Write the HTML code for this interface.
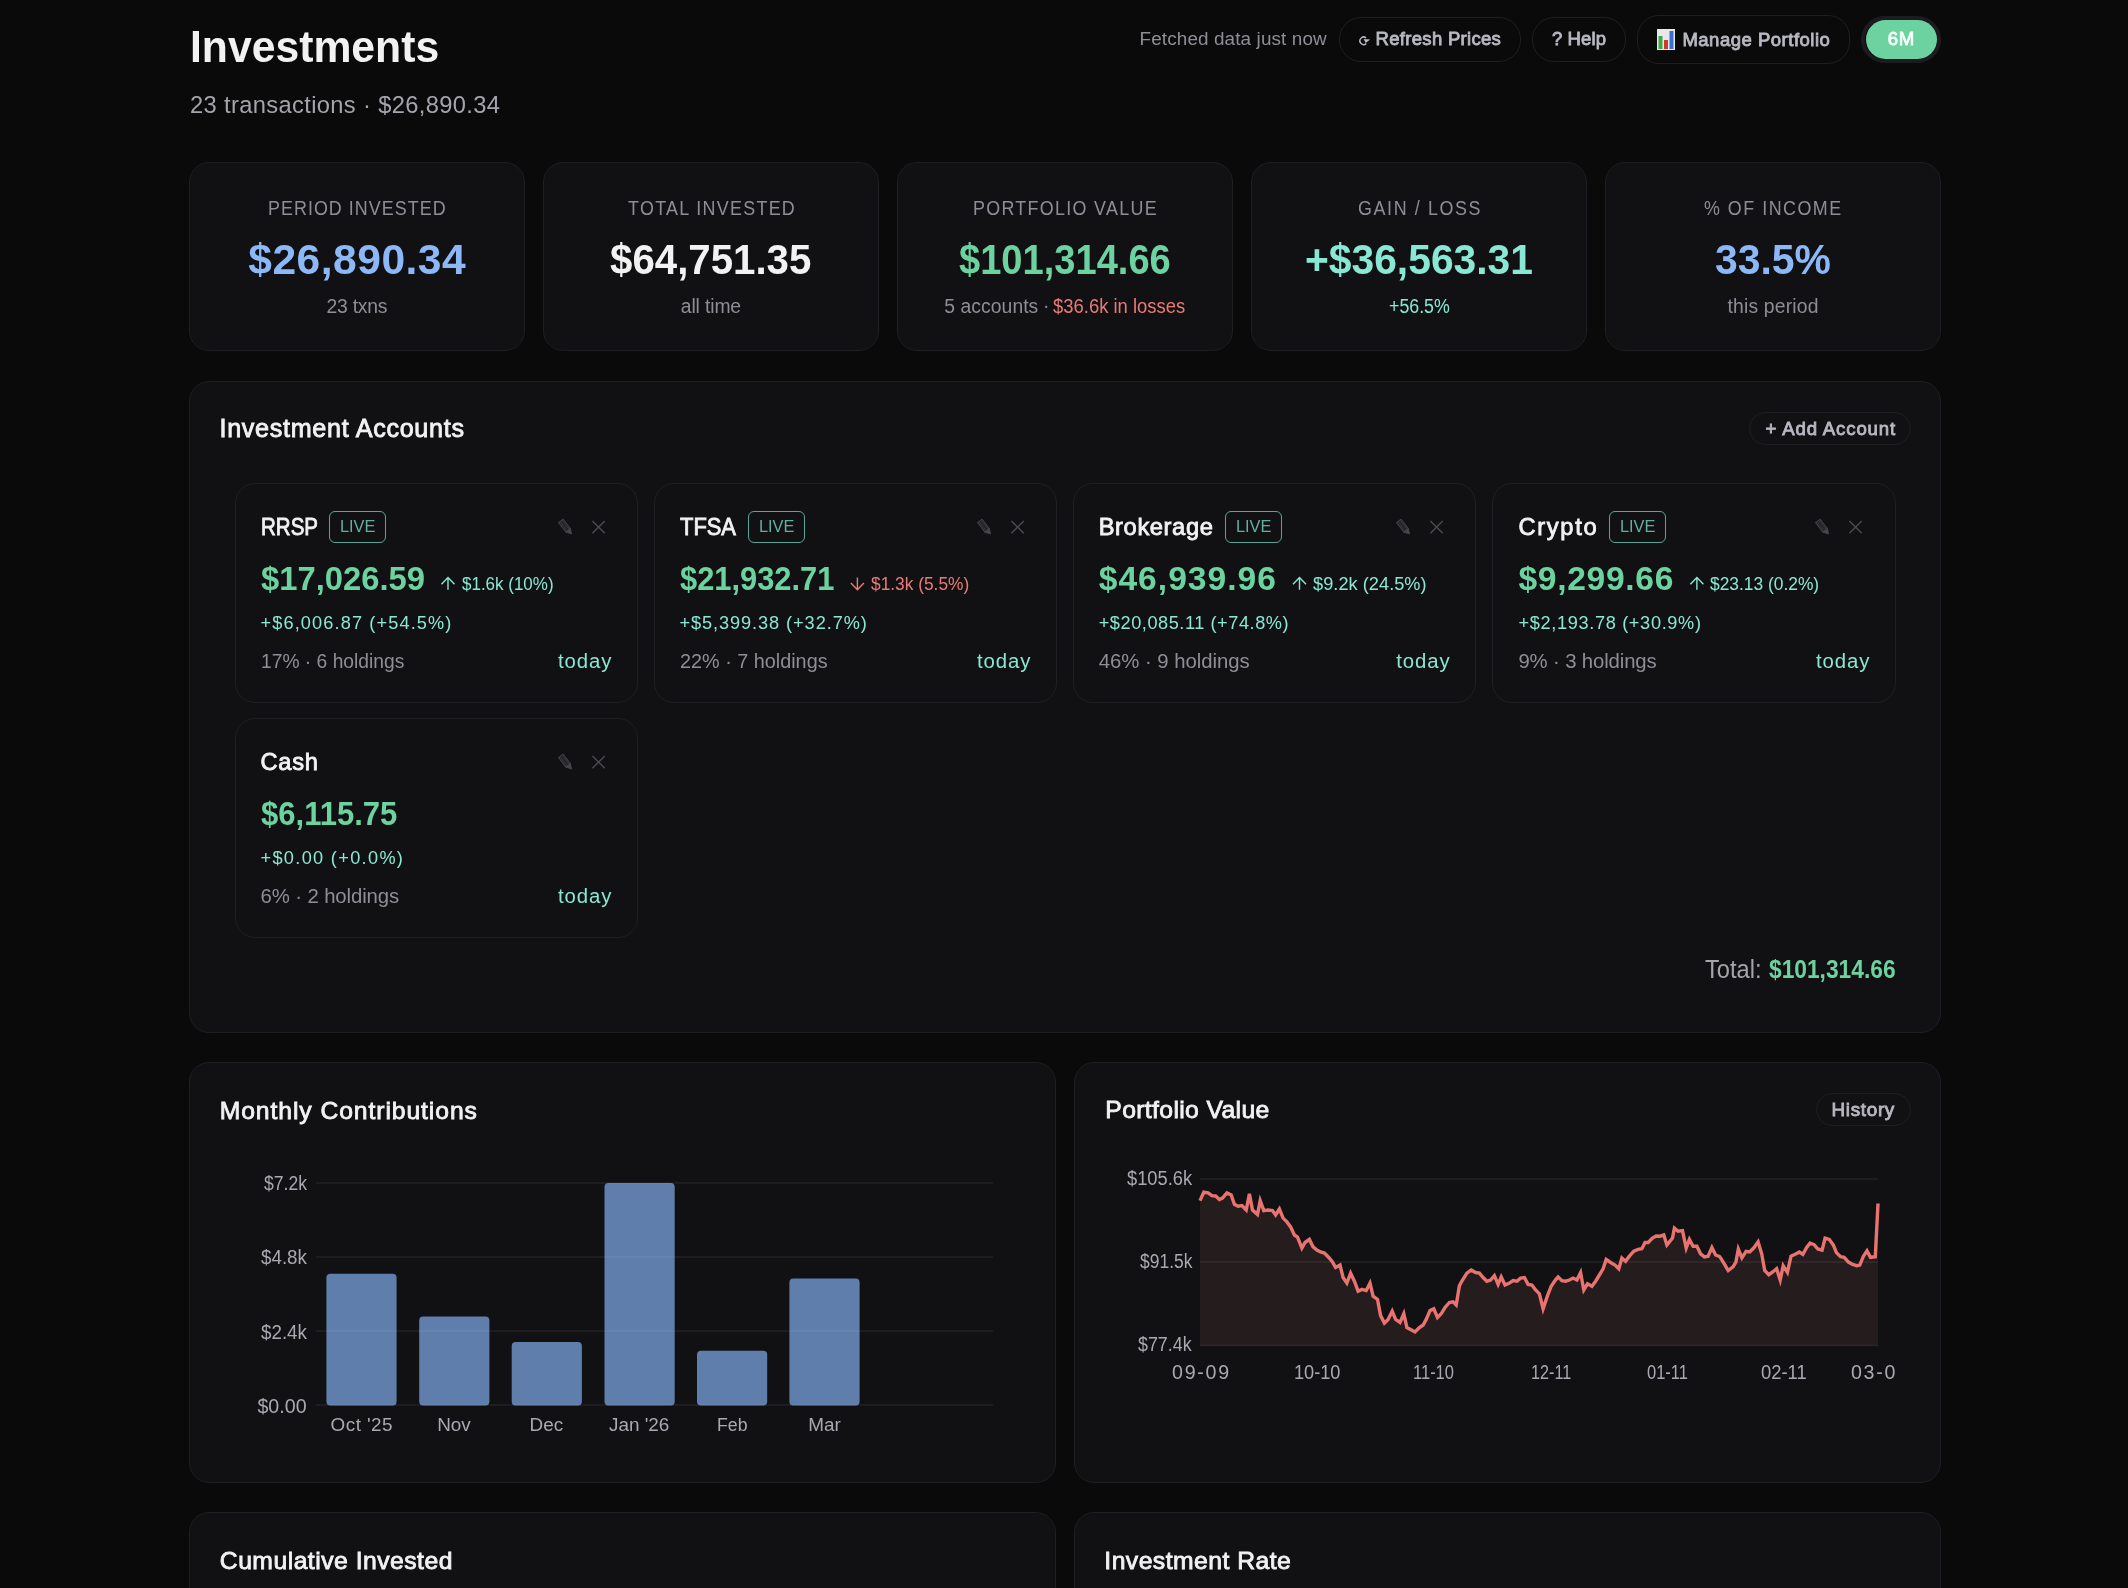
<!DOCTYPE html>
<html><head><meta charset="utf-8"><title>Investments</title>
<style>
html,body{margin:0;padding:0;background:#0a0a0b;width:2128px;height:1588px;overflow:hidden;}
body{position:relative;font-family:"Liberation Sans",sans-serif;}
.t{position:absolute;white-space:nowrap;line-height:1;}
#root{position:absolute;left:0;top:0;width:2128px;height:1588px;will-change:transform;}
.b{position:absolute;}
svg.b{overflow:visible;}
</style></head><body><div id="root">
<div class="t" style="left:190.40px;top:21.30px;font-size:45.06px;color:#f2f2f3;font-weight:700;letter-spacing:0.000px;line-height:51px;transform:scaleX(0.9478);transform-origin:0 0;">Investments</div>
<div class="t" style="left:190.00px;top:91.70px;font-size:23.69px;color:#a4a4ac;font-weight:400;letter-spacing:0.359px;line-height:26px;">23 transactions · $26,890.34</div>
<div class="t" style="left:1139.60px;top:27.80px;font-size:18.90px;color:#8e8e97;font-weight:400;letter-spacing:0.113px;line-height:21px;">Fetched data just now</div>
<div class="b" style="left:1339px;top:17px;width:182px;height:45px;border:1px solid #1f1f23;border-radius:22px;box-sizing:border-box;"></div>
<div class="t" style="left:1375.60px;top:28.00px;font-size:18.53px;color:#b8b8c2;font-weight:400;letter-spacing:0.297px;-webkit-text-stroke:0.85px #b8b8c2;line-height:21px;">Refresh Prices</div>
<svg class="b" style="left:0;top:0" width="2128" height="80"><path d="M1366.0 37.9 A3.7 3.7 0 1 0 1366.3 43.4" fill="none" stroke="#b8b8c2" stroke-width="1.45"/><path d="M1363.6 38.9 L1370.2 39.4 L1365.6 43.0 Z" fill="#b8b8c2"/></svg>
<div class="b" style="left:1532px;top:17px;width:94px;height:45px;border:1px solid #1f1f23;border-radius:22px;box-sizing:border-box;"></div>
<div class="t" style="left:1552.00px;top:28.00px;font-size:18.53px;color:#b8b8c2;font-weight:400;letter-spacing:0.085px;-webkit-text-stroke:0.85px #b8b8c2;line-height:21px;">? Help</div>
<div class="b" style="left:1637px;top:15px;width:213px;height:49px;border:1px solid #1f1f23;border-radius:22px;box-sizing:border-box;"></div>
<svg class="b" style="left:1657px;top:29px" width="18" height="21" viewBox="0 0 18 21"><rect x="0" y="0" width="18" height="21" fill="#e8e8ea"/><rect x="1.5" y="7" width="4" height="13" fill="#3aa94a"/><rect x="7" y="11" width="4" height="9" fill="#d03a2e"/><rect x="12.5" y="2" width="4" height="18" fill="#3b6fd0"/></svg>
<div class="t" style="left:1682.40px;top:28.80px;font-size:18.53px;color:#b8b8c2;font-weight:400;letter-spacing:0.500px;-webkit-text-stroke:0.85px #b8b8c2;line-height:21px;">Manage Portfolio</div>
<div class="b" style="left:1861px;top:16px;width:80px;height:47px;background:#0a0a0b;border:4px solid #1c1c20;border-radius:24px;box-sizing:border-box;"></div>
<div class="b" style="left:1866px;top:20px;width:71px;height:39px;background:#6cd3a0;border-radius:20px;"></div>
<div class="t" style="left:1887.80px;top:28.30px;font-size:18.60px;color:#f8fffb;font-weight:400;letter-spacing:0.558px;-webkit-text-stroke:0.85px #f8fffb;line-height:21px;">6M</div>
<div class="b" style="left:189px;top:162px;width:336px;height:189px;background:#111113;border:1px solid #1f1f23;border-radius:20px;box-sizing:border-box;"></div>
<div class="t" style="left:268.20px;top:196.20px;font-size:20.79px;color:#8e8e97;font-weight:400;letter-spacing:1.221px;line-height:23px;transform:scaleX(0.8600);transform-origin:0 0;">PERIOD INVESTED</div>
<div class="t" style="left:248.25px;top:235.30px;font-size:42.59px;color:#8cb8f8;font-weight:700;letter-spacing:0.483px;line-height:48px;">$26,890.34</div>
<div class="t" style="left:326.50px;top:296.40px;font-size:19.33px;color:#8e8e97;font-weight:400;letter-spacing:-0.221px;line-height:21px;">23 txns</div>
<div class="b" style="left:543px;top:162px;width:336px;height:189px;background:#111113;border:1px solid #1f1f23;border-radius:20px;box-sizing:border-box;"></div>
<div class="t" style="left:627.60px;top:196.20px;font-size:20.79px;color:#8e8e97;font-weight:400;letter-spacing:1.534px;line-height:23px;transform:scaleX(0.8600);transform-origin:0 0;">TOTAL INVESTED</div>
<div class="t" style="left:610.30px;top:235.30px;font-size:42.59px;color:#f2f2f3;font-weight:700;letter-spacing:0.000px;line-height:48px;transform:scaleX(0.9449);transform-origin:0 0;">$64,751.35</div>
<div class="t" style="left:680.85px;top:296.40px;font-size:19.33px;color:#8e8e97;font-weight:400;letter-spacing:-0.135px;line-height:21px;">all time</div>
<div class="b" style="left:897px;top:162px;width:336px;height:189px;background:#111113;border:1px solid #1f1f23;border-radius:20px;box-sizing:border-box;"></div>
<div class="t" style="left:973.15px;top:196.20px;font-size:20.79px;color:#8e8e97;font-weight:400;letter-spacing:1.535px;line-height:23px;transform:scaleX(0.8600);transform-origin:0 0;">PORTFOLIO VALUE</div>
<div class="t" style="left:959.10px;top:235.30px;font-size:42.59px;color:#6cd3a0;font-weight:700;letter-spacing:0.000px;line-height:48px;transform:scaleX(0.8943);transform-origin:0 0;">$101,314.66</div>
<div class="b" style="left:1251px;top:162px;width:336px;height:189px;background:#111113;border:1px solid #1f1f23;border-radius:20px;box-sizing:border-box;"></div>
<div class="t" style="left:1357.75px;top:196.20px;font-size:20.79px;color:#8e8e97;font-weight:400;letter-spacing:1.885px;line-height:23px;transform:scaleX(0.8600);transform-origin:0 0;">GAIN / LOSS</div>
<div class="t" style="left:1305.00px;top:235.30px;font-size:42.59px;color:#88e8d4;font-weight:700;letter-spacing:0.000px;line-height:48px;transform:scaleX(0.9579);transform-origin:0 0;">+$36,563.31</div>
<div class="t" style="left:1388.60px;top:296.40px;font-size:19.33px;color:#88e8d4;font-weight:400;letter-spacing:0.000px;line-height:21px;transform:scaleX(0.9199);transform-origin:0 0;">+56.5%</div>
<div class="b" style="left:1605px;top:162px;width:336px;height:189px;background:#111113;border:1px solid #1f1f23;border-radius:20px;box-sizing:border-box;"></div>
<div class="t" style="left:1704.40px;top:196.20px;font-size:20.79px;color:#8e8e97;font-weight:400;letter-spacing:1.749px;line-height:23px;transform:scaleX(0.8600);transform-origin:0 0;">% OF INCOME</div>
<div class="t" style="left:1715.00px;top:235.30px;font-size:42.59px;color:#8cb8f8;font-weight:700;letter-spacing:0.000px;line-height:48px;transform:scaleX(0.9608);transform-origin:0 0;">33.5%</div>
<div class="t" style="left:1727.55px;top:296.40px;font-size:19.33px;color:#8e8e97;font-weight:400;letter-spacing:0.170px;line-height:21px;">this period</div>
<div class="t" style="left:944.30px;top:296.40px;font-size:19.33px;color:#8e8e97;font-weight:400;letter-spacing:0.057px;line-height:21px;">5 accounts</div>
<div class="t" style="left:1043.00px;top:295.00px;font-size:19.30px;color:#8e8e97;font-weight:400;letter-spacing:0.000px;line-height:21px;">·</div>
<div class="t" style="left:1053.20px;top:296.40px;font-size:19.33px;color:#ea7a77;font-weight:400;letter-spacing:0.000px;line-height:21px;transform:scaleX(0.9544);transform-origin:0 0;">$36.6k in losses</div>
<div class="b" style="left:189px;top:381px;width:1752px;height:652px;background:#111113;border:1px solid #1f1f23;border-radius:20px;box-sizing:border-box;"></div>
<div class="t" style="left:219.50px;top:414.30px;font-size:25.15px;color:#f2f2f3;font-weight:400;letter-spacing:0.693px;-webkit-text-stroke:0.85px #f2f2f3;line-height:28px;">Investment Accounts</div>
<div class="b" style="left:1749px;top:412px;width:162px;height:33px;border:1px solid #1f1f23;border-radius:17px;box-sizing:border-box;"></div>
<div class="t" style="left:1765.50px;top:418.00px;font-size:18.60px;color:#b8b8c2;font-weight:400;letter-spacing:0.852px;-webkit-text-stroke:0.85px #b8b8c2;line-height:21px;">+ Add Account</div>
<div class="b" style="left:234.5px;top:483px;width:403.5px;height:219.5px;border:1px solid #1f1f23;border-radius:20px;box-sizing:border-box;"></div>
<div class="t" style="left:260.50px;top:514.00px;font-size:23.69px;color:#f2f2f3;font-weight:400;letter-spacing:0.000px;-webkit-text-stroke:0.85px #f2f2f3;line-height:26px;transform:scaleX(0.8660);transform-origin:0 0;">RRSP</div>
<div class="b" style="left:329px;top:511px;width:57px;height:32px;border:1.3px solid #5ba596;border-radius:6px;box-sizing:border-box;"></div>
<div class="t" style="left:339.80px;top:517.00px;font-size:16.86px;color:#64ae9e;font-weight:400;letter-spacing:0.000px;line-height:19px;transform:scaleX(0.9684);transform-origin:0 0;">LIVE</div>
<div class="t" style="left:260.50px;top:560.00px;font-size:33.58px;color:#6cd3a0;font-weight:700;letter-spacing:0.000px;line-height:37px;transform:scaleX(0.9759);transform-origin:0 0;">$17,026.59</div>
<svg class="b" style="left:0;top:483px" width="2128" height="120"><path d="M448.0 106.8 L448.0 94.6 M441.5 101.3 L448.0 94.6 L454.5 101.3" fill="none" stroke="#88e8d4" stroke-width="1.4"/></svg>
<div class="t" style="left:461.50px;top:573.80px;font-size:18.17px;color:#88e8d4;font-weight:400;letter-spacing:0.000px;line-height:20px;transform:scaleX(0.9350);transform-origin:0 0;">$1.6k (10%)</div>
<div class="t" style="left:260.50px;top:612.75px;font-size:18.17px;color:#88e8d4;font-weight:400;letter-spacing:1.127px;line-height:20px;">+$6,006.87 (+54.5%)</div>
<div class="t" style="left:260.50px;top:649.75px;font-size:20.35px;color:#8e8e97;font-weight:400;letter-spacing:0.000px;line-height:22px;transform:scaleX(0.9460);transform-origin:0 0;">17% · 6 holdings</div>
<div class="t" style="left:558.00px;top:649.75px;font-size:20.35px;color:#88e8d4;font-weight:400;letter-spacing:0.931px;line-height:22px;">today</div>
<svg class="b" style="left:234.5px;top:483px" width="400" height="60"><path d="M323.6 39.6 L328 36.2 L335.4 45.6 L331 49.2 Z" fill="#232327" stroke="#404046" stroke-width="1.1"/><path d="M325.6 39.4 L332.2 47.6 M327.6 38.0 L334.0 46.2" stroke="#38383d" stroke-width="0.9"/><path d="M331 49.2 L335.4 45.6 L336.6 51 Z" fill="#46464c" stroke="#46464c" stroke-width="0.8" stroke-linejoin="round"/><path d="M357.4 37.9 L369.8 50.3 M369.8 37.9 L357.4 50.3" stroke="#4a4a51" stroke-width="1.45"/></svg>
<div class="b" style="left:653.5px;top:483px;width:403.5px;height:219.5px;border:1px solid #1f1f23;border-radius:20px;box-sizing:border-box;"></div>
<div class="t" style="left:679.50px;top:514.00px;font-size:23.69px;color:#f2f2f3;font-weight:400;letter-spacing:0.000px;-webkit-text-stroke:0.85px #f2f2f3;line-height:26px;transform:scaleX(0.9247);transform-origin:0 0;">TFSA</div>
<div class="b" style="left:748px;top:511px;width:57px;height:32px;border:1.3px solid #5ba596;border-radius:6px;box-sizing:border-box;"></div>
<div class="t" style="left:758.80px;top:517.00px;font-size:16.86px;color:#64ae9e;font-weight:400;letter-spacing:0.000px;line-height:19px;transform:scaleX(0.9684);transform-origin:0 0;">LIVE</div>
<div class="t" style="left:679.50px;top:560.00px;font-size:33.58px;color:#6cd3a0;font-weight:700;letter-spacing:0.000px;line-height:37px;transform:scaleX(0.9188);transform-origin:0 0;">$21,932.71</div>
<svg class="b" style="left:0;top:483px" width="2128" height="120"><path d="M857.4 94.6 L857.4 106.8 M850.9 100.1 L857.4 106.8 L863.9 100.1" fill="none" stroke="#ea7a77" stroke-width="1.4"/></svg>
<div class="t" style="left:870.90px;top:573.80px;font-size:18.17px;color:#ea7a77;font-weight:400;letter-spacing:0.000px;line-height:20px;transform:scaleX(0.9544);transform-origin:0 0;">$1.3k (5.5%)</div>
<div class="t" style="left:679.50px;top:612.75px;font-size:18.17px;color:#88e8d4;font-weight:400;letter-spacing:0.927px;line-height:20px;">+$5,399.38 (+32.7%)</div>
<div class="t" style="left:679.50px;top:649.75px;font-size:20.35px;color:#8e8e97;font-weight:400;letter-spacing:0.000px;line-height:22px;transform:scaleX(0.9737);transform-origin:0 0;">22% · 7 holdings</div>
<div class="t" style="left:977.00px;top:649.75px;font-size:20.35px;color:#88e8d4;font-weight:400;letter-spacing:0.931px;line-height:22px;">today</div>
<svg class="b" style="left:653.5px;top:483px" width="400" height="60"><path d="M323.6 39.6 L328 36.2 L335.4 45.6 L331 49.2 Z" fill="#232327" stroke="#404046" stroke-width="1.1"/><path d="M325.6 39.4 L332.2 47.6 M327.6 38.0 L334.0 46.2" stroke="#38383d" stroke-width="0.9"/><path d="M331 49.2 L335.4 45.6 L336.6 51 Z" fill="#46464c" stroke="#46464c" stroke-width="0.8" stroke-linejoin="round"/><path d="M357.4 37.9 L369.8 50.3 M369.8 37.9 L357.4 50.3" stroke="#4a4a51" stroke-width="1.45"/></svg>
<div class="b" style="left:1072.7px;top:483px;width:403.5px;height:219.5px;border:1px solid #1f1f23;border-radius:20px;box-sizing:border-box;"></div>
<div class="t" style="left:1098.70px;top:514.00px;font-size:23.69px;color:#f2f2f3;font-weight:400;letter-spacing:0.610px;-webkit-text-stroke:0.85px #f2f2f3;line-height:26px;">Brokerage</div>
<div class="b" style="left:1225px;top:511px;width:57px;height:32px;border:1.3px solid #5ba596;border-radius:6px;box-sizing:border-box;"></div>
<div class="t" style="left:1235.80px;top:517.00px;font-size:16.86px;color:#64ae9e;font-weight:400;letter-spacing:0.000px;line-height:19px;transform:scaleX(0.9684);transform-origin:0 0;">LIVE</div>
<div class="t" style="left:1098.70px;top:560.00px;font-size:33.58px;color:#6cd3a0;font-weight:700;letter-spacing:1.028px;line-height:37px;">$46,939.96</div>
<svg class="b" style="left:0;top:483px" width="2128" height="120"><path d="M1299.5 106.8 L1299.5 94.6 M1293.0 101.3 L1299.5 94.6 L1306.0 101.3" fill="none" stroke="#88e8d4" stroke-width="1.4"/></svg>
<div class="t" style="left:1313.00px;top:573.80px;font-size:18.17px;color:#88e8d4;font-weight:400;letter-spacing:0.048px;line-height:20px;">$9.2k (24.5%)</div>
<div class="t" style="left:1098.70px;top:612.75px;font-size:18.17px;color:#88e8d4;font-weight:400;letter-spacing:0.554px;line-height:20px;">+$20,085.11 (+74.8%)</div>
<div class="t" style="left:1098.70px;top:649.75px;font-size:20.35px;color:#8e8e97;font-weight:400;letter-spacing:-0.039px;line-height:22px;">46% · 9 holdings</div>
<div class="t" style="left:1396.20px;top:649.75px;font-size:20.35px;color:#88e8d4;font-weight:400;letter-spacing:0.931px;line-height:22px;">today</div>
<svg class="b" style="left:1072.7px;top:483px" width="400" height="60"><path d="M323.6 39.6 L328 36.2 L335.4 45.6 L331 49.2 Z" fill="#232327" stroke="#404046" stroke-width="1.1"/><path d="M325.6 39.4 L332.2 47.6 M327.6 38.0 L334.0 46.2" stroke="#38383d" stroke-width="0.9"/><path d="M331 49.2 L335.4 45.6 L336.6 51 Z" fill="#46464c" stroke="#46464c" stroke-width="0.8" stroke-linejoin="round"/><path d="M357.4 37.9 L369.8 50.3 M369.8 37.9 L357.4 50.3" stroke="#4a4a51" stroke-width="1.45"/></svg>
<div class="b" style="left:1492.4px;top:483px;width:403.5px;height:219.5px;border:1px solid #1f1f23;border-radius:20px;box-sizing:border-box;"></div>
<div class="t" style="left:1518.40px;top:514.00px;font-size:23.69px;color:#f2f2f3;font-weight:400;letter-spacing:1.685px;-webkit-text-stroke:0.85px #f2f2f3;line-height:26px;">Crypto</div>
<div class="b" style="left:1609px;top:511px;width:57px;height:32px;border:1.3px solid #5ba596;border-radius:6px;box-sizing:border-box;"></div>
<div class="t" style="left:1619.80px;top:517.00px;font-size:16.86px;color:#64ae9e;font-weight:400;letter-spacing:0.000px;line-height:19px;transform:scaleX(0.9684);transform-origin:0 0;">LIVE</div>
<div class="t" style="left:1518.40px;top:560.00px;font-size:33.58px;color:#6cd3a0;font-weight:700;letter-spacing:0.702px;line-height:37px;">$9,299.66</div>
<svg class="b" style="left:0;top:483px" width="2128" height="120"><path d="M1696.9 106.8 L1696.9 94.6 M1690.4 101.3 L1696.9 94.6 L1703.4 101.3" fill="none" stroke="#88e8d4" stroke-width="1.4"/></svg>
<div class="t" style="left:1710.40px;top:573.80px;font-size:18.17px;color:#88e8d4;font-weight:400;letter-spacing:0.000px;line-height:20px;transform:scaleX(0.9567);transform-origin:0 0;">$23.13 (0.2%)</div>
<div class="t" style="left:1518.40px;top:612.75px;font-size:18.17px;color:#88e8d4;font-weight:400;letter-spacing:0.666px;line-height:20px;">+$2,193.78 (+30.9%)</div>
<div class="t" style="left:1518.40px;top:649.75px;font-size:20.35px;color:#8e8e97;font-weight:400;letter-spacing:-0.140px;line-height:22px;">9% · 3 holdings</div>
<div class="t" style="left:1815.90px;top:649.75px;font-size:20.35px;color:#88e8d4;font-weight:400;letter-spacing:0.931px;line-height:22px;">today</div>
<svg class="b" style="left:1492.4px;top:483px" width="400" height="60"><path d="M323.6 39.6 L328 36.2 L335.4 45.6 L331 49.2 Z" fill="#232327" stroke="#404046" stroke-width="1.1"/><path d="M325.6 39.4 L332.2 47.6 M327.6 38.0 L334.0 46.2" stroke="#38383d" stroke-width="0.9"/><path d="M331 49.2 L335.4 45.6 L336.6 51 Z" fill="#46464c" stroke="#46464c" stroke-width="0.8" stroke-linejoin="round"/><path d="M357.4 37.9 L369.8 50.3 M369.8 37.9 L357.4 50.3" stroke="#4a4a51" stroke-width="1.45"/></svg>
<div class="b" style="left:234.5px;top:718px;width:403.5px;height:219.5px;border:1px solid #1f1f23;border-radius:20px;box-sizing:border-box;"></div>
<div class="t" style="left:260.50px;top:749.00px;font-size:23.69px;color:#f2f2f3;font-weight:400;letter-spacing:0.701px;-webkit-text-stroke:0.85px #f2f2f3;line-height:26px;">Cash</div>
<div class="t" style="left:260.50px;top:795.00px;font-size:33.58px;color:#6cd3a0;font-weight:700;letter-spacing:0.000px;line-height:37px;transform:scaleX(0.9245);transform-origin:0 0;">$6,115.75</div>
<div class="t" style="left:260.50px;top:847.75px;font-size:18.17px;color:#88e8d4;font-weight:400;letter-spacing:1.326px;line-height:20px;">+$0.00 (+0.0%)</div>
<div class="t" style="left:260.50px;top:884.75px;font-size:20.35px;color:#8e8e97;font-weight:400;letter-spacing:-0.112px;line-height:22px;">6% · 2 holdings</div>
<div class="t" style="left:558.00px;top:884.75px;font-size:20.35px;color:#88e8d4;font-weight:400;letter-spacing:0.931px;line-height:22px;">today</div>
<svg class="b" style="left:234.5px;top:718px" width="400" height="60"><path d="M323.6 39.6 L328 36.2 L335.4 45.6 L331 49.2 Z" fill="#232327" stroke="#404046" stroke-width="1.1"/><path d="M325.6 39.4 L332.2 47.6 M327.6 38.0 L334.0 46.2" stroke="#38383d" stroke-width="0.9"/><path d="M331 49.2 L335.4 45.6 L336.6 51 Z" fill="#46464c" stroke="#46464c" stroke-width="0.8" stroke-linejoin="round"/><path d="M357.4 37.9 L369.8 50.3 M369.8 37.9 L357.4 50.3" stroke="#4a4a51" stroke-width="1.45"/></svg>
<div class="t" style="left:1705.40px;top:955.30px;font-size:25.87px;color:#a4a4ac;font-weight:400;letter-spacing:0.000px;line-height:28px;transform:scaleX(0.9153);transform-origin:0 0;">Total:</div>
<div class="t" style="left:1769.00px;top:955.30px;font-size:25.87px;color:#6cd3a0;font-weight:700;letter-spacing:0.000px;line-height:28px;transform:scaleX(0.8799);transform-origin:0 0;">$101,314.66</div>
<div class="b" style="left:189px;top:1062px;width:867px;height:421px;background:#111113;border:1px solid #1f1f23;border-radius:20px;box-sizing:border-box;"></div>
<div class="b" style="left:1074px;top:1062px;width:867px;height:421px;background:#111113;border:1px solid #1f1f23;border-radius:20px;box-sizing:border-box;"></div>
<div class="t" style="left:219.70px;top:1097.00px;font-size:24.71px;color:#f2f2f3;font-weight:400;letter-spacing:0.917px;-webkit-text-stroke:0.85px #f2f2f3;line-height:27px;">Monthly Contributions</div>
<div class="t" style="left:1105.30px;top:1096.00px;font-size:24.71px;color:#f2f2f3;font-weight:400;letter-spacing:0.365px;-webkit-text-stroke:0.85px #f2f2f3;line-height:27px;">Portfolio Value</div>
<div class="b" style="left:1816px;top:1093px;width:95px;height:33px;border:1px solid #1f1f23;border-radius:17px;box-sizing:border-box;"></div>
<div class="t" style="left:1831.50px;top:1099.00px;font-size:18.90px;color:#b8b8c2;font-weight:400;letter-spacing:0.669px;-webkit-text-stroke:0.85px #b8b8c2;line-height:21px;">History</div>
<svg class="b" style="left:0;top:0" width="2128" height="1588"><rect x="326.4" y="1273.8" width="70.2" height="131.7" rx="4" ry="4" fill="#5f7eab"/><rect x="419.2" y="1316.4" width="70.2" height="89.1" rx="4" ry="4" fill="#5f7eab"/><rect x="511.7" y="1341.9" width="70.2" height="63.6" rx="4" ry="4" fill="#5f7eab"/><rect x="604.5" y="1183" width="70.2" height="222.5" rx="4" ry="4" fill="#5f7eab"/><rect x="697" y="1350.7" width="70.2" height="54.8" rx="4" ry="4" fill="#5f7eab"/><rect x="789.4" y="1278.4" width="70.2" height="127.1" rx="4" ry="4" fill="#5f7eab"/><line x1="316" y1="1183" x2="993" y2="1183" stroke="rgba(255,255,255,0.07)" stroke-width="1.5"/><line x1="316" y1="1257" x2="993" y2="1257" stroke="rgba(255,255,255,0.07)" stroke-width="1.5"/><line x1="316" y1="1331" x2="993" y2="1331" stroke="rgba(255,255,255,0.07)" stroke-width="1.5"/><line x1="316" y1="1405" x2="993" y2="1405" stroke="rgba(255,255,255,0.07)" stroke-width="1.5"/></svg>
<div class="t" style="left:263.70px;top:1172.00px;font-size:19.62px;color:#a9a9b1;font-weight:400;letter-spacing:0.000px;line-height:22px;transform:scaleX(0.8952);transform-origin:0 0;">$7.2k</div>
<div class="t" style="left:260.70px;top:1246.00px;font-size:19.62px;color:#a9a9b1;font-weight:400;letter-spacing:0.000px;line-height:22px;transform:scaleX(0.9576);transform-origin:0 0;">$4.8k</div>
<div class="t" style="left:260.70px;top:1320.60px;font-size:19.62px;color:#a9a9b1;font-weight:400;letter-spacing:0.000px;line-height:22px;transform:scaleX(0.9576);transform-origin:0 0;">$2.4k</div>
<div class="t" style="left:257.40px;top:1395.00px;font-size:19.62px;color:#a9a9b1;font-weight:400;letter-spacing:0.051px;line-height:22px;">$0.00</div>
<div class="t" style="left:330.60px;top:1414.40px;font-size:18.90px;color:#a9a9b1;font-weight:400;letter-spacing:0.454px;line-height:21px;">Oct &#x27;25</div>
<div class="t" style="left:437.20px;top:1414.40px;font-size:18.90px;color:#a9a9b1;font-weight:400;letter-spacing:-0.048px;line-height:21px;">Nov</div>
<div class="t" style="left:529.60px;top:1414.40px;font-size:18.90px;color:#a9a9b1;font-weight:400;letter-spacing:-0.048px;line-height:21px;">Dec</div>
<div class="t" style="left:609.10px;top:1414.40px;font-size:18.90px;color:#a9a9b1;font-weight:400;letter-spacing:-0.022px;line-height:21px;">Jan &#x27;26</div>
<div class="t" style="left:716.60px;top:1414.40px;font-size:18.90px;color:#a9a9b1;font-weight:400;letter-spacing:0.000px;line-height:21px;transform:scaleX(0.9368);transform-origin:0 0;">Feb</div>
<div class="t" style="left:808.20px;top:1414.40px;font-size:18.90px;color:#a9a9b1;font-weight:400;letter-spacing:0.031px;line-height:21px;">Mar</div>
<svg class="b" style="left:0;top:0" width="2128" height="1588"><path d="M1200.0,1345.6 L1200.0,1200.6 L1203.8,1192.2 L1208.1,1192.8 L1211.9,1195.6 L1215.6,1196.0 L1219.4,1199.4 L1222.5,1198.1 L1226.9,1192.9 L1231.2,1195.0 L1234.4,1204.4 L1238.1,1206.2 L1241.9,1205.6 L1246.2,1210.0 L1249.4,1193.8 L1252.5,1210.0 L1257.5,1214.4 L1260.2,1200.6 L1263.8,1210.6 L1268.1,1210.0 L1272.5,1210.6 L1275.6,1215.0 L1279.4,1209.0 L1283.1,1218.1 L1286.9,1221.9 L1290.6,1226.9 L1294.4,1235.0 L1297.5,1237.1 L1301.9,1248.1 L1305.0,1242.5 L1309.4,1239.4 L1313.1,1246.9 L1316.9,1250.0 L1320.6,1251.9 L1324.4,1253.1 L1328.8,1257.5 L1332.5,1261.9 L1335.6,1267.5 L1340.0,1265.0 L1343.1,1277.5 L1346.9,1283.1 L1350.6,1273.1 L1354.4,1281.2 L1358.1,1291.2 L1361.9,1289.4 L1366.2,1290.6 L1370.0,1283.1 L1373.1,1296.2 L1377.5,1299.4 L1380.6,1315.6 L1384.4,1323.1 L1388.1,1319.4 L1392.2,1311.2 L1395.6,1319.4 L1400.0,1322.5 L1403.8,1313.8 L1406.9,1327.5 L1410.6,1329.4 L1415.0,1331.9 L1418.8,1328.1 L1423.1,1325.0 L1426.2,1319.4 L1430.0,1310.6 L1433.8,1308.8 L1437.5,1317.5 L1441.2,1313.8 L1445.0,1307.5 L1449.4,1302.5 L1453.1,1301.9 L1456.2,1305.0 L1459.4,1285.6 L1462.5,1280.0 L1466.9,1273.1 L1471.2,1270.0 L1475.6,1272.5 L1479.4,1273.1 L1483.1,1277.5 L1486.9,1281.2 L1490.6,1280.0 L1494.4,1275.6 L1498.1,1284.4 L1501.2,1276.9 L1505.0,1285.0 L1509.4,1283.1 L1513.1,1280.6 L1516.9,1281.2 L1520.6,1278.1 L1524.4,1277.5 L1528.1,1284.4 L1531.9,1285.0 L1535.6,1290.0 L1539.4,1293.8 L1543.1,1308.8 L1547.5,1295.6 L1551.2,1286.2 L1555.0,1280.6 L1558.1,1276.9 L1561.9,1280.6 L1565.6,1281.2 L1569.4,1280.0 L1573.1,1278.1 L1576.9,1280.0 L1580.6,1272.5 L1583.8,1290.0 L1587.5,1283.8 L1591.9,1286.2 L1595.6,1281.2 L1599.4,1275.0 L1603.1,1268.8 L1606.2,1259.4 L1610.6,1262.5 L1615.0,1265.0 L1618.8,1268.8 L1621.9,1258.1 L1625.6,1261.2 L1629.4,1256.2 L1633.8,1251.2 L1638.1,1249.4 L1641.9,1248.8 L1645.0,1242.5 L1648.1,1242.5 L1652.5,1238.1 L1656.2,1236.0 L1660.0,1236.2 L1663.8,1235.0 L1666.9,1245.0 L1672.5,1238.1 L1674.4,1228.1 L1678.1,1231.2 L1682.5,1230.6 L1686.2,1248.1 L1689.4,1239.4 L1693.1,1246.2 L1696.9,1246.2 L1700.6,1253.8 L1704.4,1256.9 L1708.1,1256.2 L1711.9,1247.5 L1715.6,1255.0 L1718.8,1256.2 L1719.8,1256.7 L1724.0,1263.3 L1728.2,1270.5 L1733.0,1266.9 L1735.9,1262.1 L1738.3,1249.0 L1741.9,1257.9 L1746.1,1251.4 L1749.7,1252.0 L1753.9,1247.8 L1758.1,1241.8 L1761.7,1253.8 L1764.7,1270.5 L1768.8,1274.7 L1773.0,1271.7 L1776.6,1268.7 L1780.2,1280.1 L1783.2,1265.7 L1787.4,1272.3 L1791.0,1256.2 L1795.2,1254.3 L1799.3,1252.0 L1802.9,1254.3 L1806.5,1247.8 L1810.1,1243.0 L1814.3,1244.8 L1817.9,1249.0 L1822.1,1250.2 L1825.1,1238.2 L1829.3,1239.4 L1833.5,1245.4 L1836.4,1252.6 L1840.6,1256.7 L1844.2,1257.3 L1848.4,1262.1 L1852.6,1264.5 L1856.8,1265.7 L1859.8,1265.1 L1863.4,1256.2 L1867.0,1250.8 L1870.5,1257.3 L1875.3,1256.7 L1878.0,1203.5 L1878.0,1345.6 Z" fill="#251c1e"/><line x1="1200" y1="1179" x2="1878" y2="1179" stroke="rgba(255,255,255,0.07)" stroke-width="1.5"/><line x1="1200" y1="1262" x2="1878" y2="1262" stroke="rgba(255,255,255,0.07)" stroke-width="1.5"/><line x1="1200" y1="1345.6" x2="1878" y2="1345.6" stroke="rgba(255,255,255,0.07)" stroke-width="1.5"/><polyline points="1200.0,1200.6 1203.8,1192.2 1208.1,1192.8 1211.9,1195.6 1215.6,1196.0 1219.4,1199.4 1222.5,1198.1 1226.9,1192.9 1231.2,1195.0 1234.4,1204.4 1238.1,1206.2 1241.9,1205.6 1246.2,1210.0 1249.4,1193.8 1252.5,1210.0 1257.5,1214.4 1260.2,1200.6 1263.8,1210.6 1268.1,1210.0 1272.5,1210.6 1275.6,1215.0 1279.4,1209.0 1283.1,1218.1 1286.9,1221.9 1290.6,1226.9 1294.4,1235.0 1297.5,1237.1 1301.9,1248.1 1305.0,1242.5 1309.4,1239.4 1313.1,1246.9 1316.9,1250.0 1320.6,1251.9 1324.4,1253.1 1328.8,1257.5 1332.5,1261.9 1335.6,1267.5 1340.0,1265.0 1343.1,1277.5 1346.9,1283.1 1350.6,1273.1 1354.4,1281.2 1358.1,1291.2 1361.9,1289.4 1366.2,1290.6 1370.0,1283.1 1373.1,1296.2 1377.5,1299.4 1380.6,1315.6 1384.4,1323.1 1388.1,1319.4 1392.2,1311.2 1395.6,1319.4 1400.0,1322.5 1403.8,1313.8 1406.9,1327.5 1410.6,1329.4 1415.0,1331.9 1418.8,1328.1 1423.1,1325.0 1426.2,1319.4 1430.0,1310.6 1433.8,1308.8 1437.5,1317.5 1441.2,1313.8 1445.0,1307.5 1449.4,1302.5 1453.1,1301.9 1456.2,1305.0 1459.4,1285.6 1462.5,1280.0 1466.9,1273.1 1471.2,1270.0 1475.6,1272.5 1479.4,1273.1 1483.1,1277.5 1486.9,1281.2 1490.6,1280.0 1494.4,1275.6 1498.1,1284.4 1501.2,1276.9 1505.0,1285.0 1509.4,1283.1 1513.1,1280.6 1516.9,1281.2 1520.6,1278.1 1524.4,1277.5 1528.1,1284.4 1531.9,1285.0 1535.6,1290.0 1539.4,1293.8 1543.1,1308.8 1547.5,1295.6 1551.2,1286.2 1555.0,1280.6 1558.1,1276.9 1561.9,1280.6 1565.6,1281.2 1569.4,1280.0 1573.1,1278.1 1576.9,1280.0 1580.6,1272.5 1583.8,1290.0 1587.5,1283.8 1591.9,1286.2 1595.6,1281.2 1599.4,1275.0 1603.1,1268.8 1606.2,1259.4 1610.6,1262.5 1615.0,1265.0 1618.8,1268.8 1621.9,1258.1 1625.6,1261.2 1629.4,1256.2 1633.8,1251.2 1638.1,1249.4 1641.9,1248.8 1645.0,1242.5 1648.1,1242.5 1652.5,1238.1 1656.2,1236.0 1660.0,1236.2 1663.8,1235.0 1666.9,1245.0 1672.5,1238.1 1674.4,1228.1 1678.1,1231.2 1682.5,1230.6 1686.2,1248.1 1689.4,1239.4 1693.1,1246.2 1696.9,1246.2 1700.6,1253.8 1704.4,1256.9 1708.1,1256.2 1711.9,1247.5 1715.6,1255.0 1718.8,1256.2 1719.8,1256.7 1724.0,1263.3 1728.2,1270.5 1733.0,1266.9 1735.9,1262.1 1738.3,1249.0 1741.9,1257.9 1746.1,1251.4 1749.7,1252.0 1753.9,1247.8 1758.1,1241.8 1761.7,1253.8 1764.7,1270.5 1768.8,1274.7 1773.0,1271.7 1776.6,1268.7 1780.2,1280.1 1783.2,1265.7 1787.4,1272.3 1791.0,1256.2 1795.2,1254.3 1799.3,1252.0 1802.9,1254.3 1806.5,1247.8 1810.1,1243.0 1814.3,1244.8 1817.9,1249.0 1822.1,1250.2 1825.1,1238.2 1829.3,1239.4 1833.5,1245.4 1836.4,1252.6 1840.6,1256.7 1844.2,1257.3 1848.4,1262.1 1852.6,1264.5 1856.8,1265.7 1859.8,1265.1 1863.4,1256.2 1867.0,1250.8 1870.5,1257.3 1875.3,1256.7 1878.0,1203.5" fill="none" stroke="#e8736f" stroke-width="3.4" stroke-linejoin="miter" stroke-miterlimit="4"/></svg>
<div class="t" style="left:1126.80px;top:1166.50px;font-size:19.62px;color:#a9a9b1;font-weight:400;letter-spacing:0.000px;line-height:22px;transform:scaleX(0.9331);transform-origin:0 0;">$105.6k</div>
<div class="t" style="left:1139.50px;top:1250.30px;font-size:19.62px;color:#a9a9b1;font-weight:400;letter-spacing:0.000px;line-height:22px;transform:scaleX(0.8906);transform-origin:0 0;">$91.5k</div>
<div class="t" style="left:1138.30px;top:1333.20px;font-size:19.62px;color:#a9a9b1;font-weight:400;letter-spacing:0.000px;line-height:22px;transform:scaleX(0.9110);transform-origin:0 0;">$77.4k</div>
<div class="t" style="left:1172.10px;top:1361.00px;font-size:19.62px;color:#a9a9b1;font-weight:400;letter-spacing:1.726px;line-height:22px;">09-09</div>
<div class="t" style="left:1293.50px;top:1361.00px;font-size:19.62px;color:#a9a9b1;font-weight:400;letter-spacing:0.000px;line-height:22px;transform:scaleX(0.9264);transform-origin:0 0;">10-10</div>
<div class="t" style="left:1413.20px;top:1361.00px;font-size:19.62px;color:#a9a9b1;font-weight:400;letter-spacing:0.000px;line-height:22px;transform:scaleX(0.8415);transform-origin:0 0;">11-10</div>
<div class="t" style="left:1530.80px;top:1361.00px;font-size:19.62px;color:#a9a9b1;font-weight:400;letter-spacing:0.000px;line-height:22px;transform:scaleX(0.8251);transform-origin:0 0;">12-11</div>
<div class="t" style="left:1647.10px;top:1361.00px;font-size:19.62px;color:#a9a9b1;font-weight:400;letter-spacing:0.000px;line-height:22px;transform:scaleX(0.8415);transform-origin:0 0;">01-11</div>
<div class="t" style="left:1761.30px;top:1361.00px;font-size:19.62px;color:#a9a9b1;font-weight:400;letter-spacing:0.000px;line-height:22px;transform:scaleX(0.9380);transform-origin:0 0;">02-11</div>
<div class="b" style="left:1840px;top:1350px;width:57px;height:40px;overflow:hidden">
<div class="t" style="left:11.00px;top:11.00px;font-size:19.62px;color:#a9a9b1;font-weight:400;letter-spacing:1.701px;line-height:22px;">03-07</div>
</div>
<div class="b" style="left:189px;top:1512px;width:867px;height:200px;background:#111113;border:1px solid #1f1f23;border-radius:20px;box-sizing:border-box;"></div>
<div class="b" style="left:1074px;top:1512px;width:867px;height:200px;background:#111113;border:1px solid #1f1f23;border-radius:20px;box-sizing:border-box;"></div>
<div class="t" style="left:219.80px;top:1547.00px;font-size:24.71px;color:#f2f2f3;font-weight:400;letter-spacing:0.491px;-webkit-text-stroke:0.85px #f2f2f3;line-height:27px;">Cumulative Invested</div>
<div class="t" style="left:1104.30px;top:1547.00px;font-size:24.71px;color:#f2f2f3;font-weight:400;letter-spacing:0.471px;-webkit-text-stroke:0.85px #f2f2f3;line-height:27px;">Investment Rate</div>
</div></body></html>
